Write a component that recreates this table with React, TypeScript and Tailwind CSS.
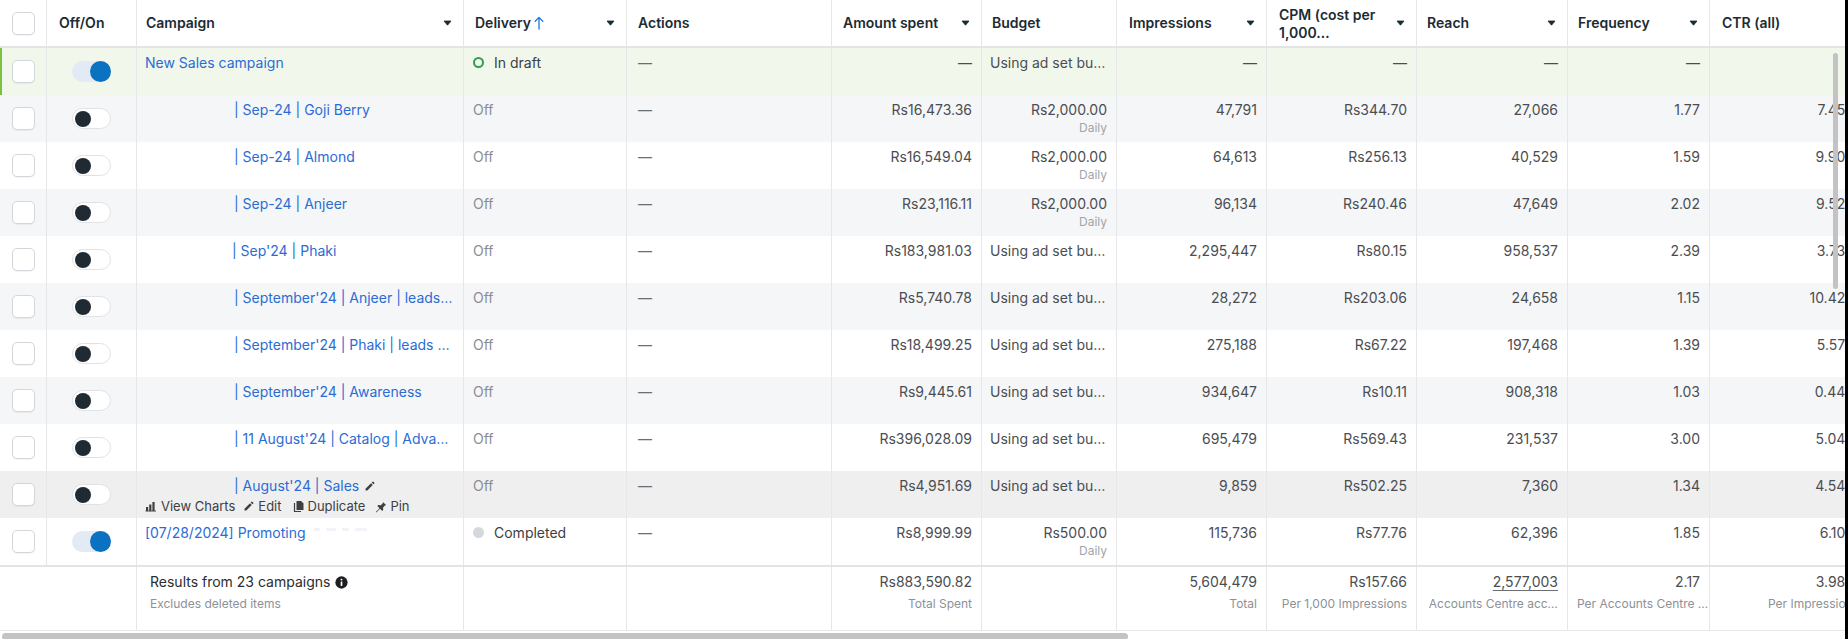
import React from "react";

const GRID =
  "grid grid-cols-[47px_90px_327px_163px_205px_150px_135px_150px_150px_151px_142px_159px]";

type Row = {
  name: string;
  indent: number;
  on?: boolean;
  delivery: "off" | "draft" | "completed";
  spent: string;
  budget: string;
  daily?: boolean;
  imp: string;
  cpm: string;
  reach: string;
  freq: string;
  ctr: string;
  bg: string;
  edit?: boolean;
  green?: boolean;
  faint?: boolean;
};

const USING = "Using ad set bu…";

const rows: Row[] = [
  { name: "New Sales campaign", indent: 0, on: true, delivery: "draft", spent: "—", budget: USING, imp: "—", cpm: "—", reach: "—", freq: "—", ctr: "—", bg: "bg-[#f1f8eb]", green: true },
  { name: "| Sep-24 | Goji Berry", indent: 89, delivery: "off", spent: "Rs16,473.36", budget: "Rs2,000.00", daily: true, imp: "47,791", cpm: "Rs344.70", reach: "27,066", freq: "1.77", ctr: "7.45%", bg: "bg-[#f5f6f7]" },
  { name: "| Sep-24 | Almond", indent: 89, delivery: "off", spent: "Rs16,549.04", budget: "Rs2,000.00", daily: true, imp: "64,613", cpm: "Rs256.13", reach: "40,529", freq: "1.59", ctr: "9.90%", bg: "bg-white" },
  { name: "| Sep-24 | Anjeer", indent: 89, delivery: "off", spent: "Rs23,116.11", budget: "Rs2,000.00", daily: true, imp: "96,134", cpm: "Rs240.46", reach: "47,649", freq: "2.02", ctr: "9.52%", bg: "bg-[#f5f6f7]" },
  { name: "| Sep'24 | Phaki", indent: 87, delivery: "off", spent: "Rs183,981.03", budget: USING, imp: "2,295,447", cpm: "Rs80.15", reach: "958,537", freq: "2.39", ctr: "3.73%", bg: "bg-white" },
  { name: "| September'24 | Anjeer | leads…", indent: 89, delivery: "off", spent: "Rs5,740.78", budget: USING, imp: "28,272", cpm: "Rs203.06", reach: "24,658", freq: "1.15", ctr: "10.42%", bg: "bg-[#f5f6f7]" },
  { name: "| September'24 | Phaki | leads …", indent: 89, delivery: "off", spent: "Rs18,499.25", budget: USING, imp: "275,188", cpm: "Rs67.22", reach: "197,468", freq: "1.39", ctr: "5.57%", bg: "bg-white" },
  { name: "| September'24 | Awareness", indent: 89, delivery: "off", spent: "Rs9,445.61", budget: USING, imp: "934,647", cpm: "Rs10.11", reach: "908,318", freq: "1.03", ctr: "0.44%", bg: "bg-[#f5f6f7]" },
  { name: "| 11 August'24 | Catalog | Adva…", indent: 89, delivery: "off", spent: "Rs396,028.09", budget: USING, imp: "695,479", cpm: "Rs569.43", reach: "231,537", freq: "3.00", ctr: "5.04%", bg: "bg-white" },
  { name: "| August'24 | Sales", indent: 89, delivery: "off", spent: "Rs4,951.69", budget: USING, imp: "9,859", cpm: "Rs502.25", reach: "7,360", freq: "1.34", ctr: "4.54%", bg: "bg-[#efefef]", edit: true },
  { name: "[07/28/2024] Promoting", indent: 0, on: true, delivery: "completed", spent: "Rs8,999.99", budget: "Rs500.00", daily: true, imp: "115,736", cpm: "Rs77.76", reach: "62,396", freq: "1.85", ctr: "6.10%", bg: "bg-white", faint: true },
];

const Caret = () => (
  <svg width="9" height="6" viewBox="0 0 9 6" className="shrink-0">
    <path d="M1 1h7L4.5 5.2z" fill="#1c2b33" stroke="#1c2b33" strokeWidth="0.8" strokeLinejoin="round" />
  </svg>
);

const UpArrow = () => (
  <svg width="10" height="14" viewBox="0 0 10 14" className="shrink-0">
    <path d="M5 13V1.5M1.2 5.2L5 1.4l3.8 3.8" fill="none" stroke="#1b74e4" strokeWidth="1.3" strokeLinecap="round" strokeLinejoin="round" />
  </svg>
);

const Checkbox = () => (
  <div className="w-[23px] h-[23px] rounded-[5px] border border-[#d3d6db] bg-white shadow-[0_1px_1px_rgba(0,0,0,0.05)]" />
);

const Toggle = ({ on }: { on?: boolean }) =>
  on ? (
    <div className="w-[39px] h-[21px] rounded-full bg-[#e2eaf5] flex items-center justify-end">
      <div className="w-[21px] h-[21px] rounded-full bg-[#0a72c0]" />
    </div>
  ) : (
    <div className="w-[39px] h-[21px] rounded-full bg-white border border-[#e0e2e6] flex items-center pl-[2px]">
      <div className="w-[16px] h-[16px] rounded-full bg-[#1f2a33]" />
    </div>
  );

const Pencil = ({ size = 12, color = "#3d4043" }: { size?: number; color?: string }) => (
  <svg width={size} height={size} viewBox="0 0 16 16" className="shrink-0">
    <path d="M2 11.6V14h2.4l7.3-7.3-2.4-2.4L2 11.6z" fill={color} />
    <path d="M13.8 4.6a.8.8 0 000-1.1l-1.3-1.3a.8.8 0 00-1.1 0L10.2 3.4l2.4 2.4 1.2-1.2z" fill={color} />
  </svg>
);

const Bars = () => (
  <svg width="12" height="12" viewBox="0 0 12 12" className="shrink-0">
    <rect x="1" y="7" width="2.2" height="4" fill="#3d4043" />
    <rect x="4.2" y="4.5" width="2.2" height="6.5" fill="#3d4043" />
    <rect x="7.4" y="2" width="2.2" height="9" fill="#3d4043" />
    <rect x="0.5" y="10.6" width="10.5" height="0.9" fill="#3d4043" />
  </svg>
);

const CopyIcon = () => (
  <svg width="12" height="13" viewBox="0 0 12 13" className="shrink-0">
    <path d="M1.5 3v8.5H8" fill="none" stroke="#3d4043" strokeWidth="1.2" />
    <path d="M3.5 1h4.6L10.5 3.4V10H3.5z" fill="#3d4043" />
  </svg>
);

const PinIcon = () => (
  <svg width="13" height="13" viewBox="0 0 16 16" className="shrink-0">
    <path d="M9.8 1.2l5 5-1.3.5-2.4 2.4.3 3-1.3 1.3-2.7-2.7-4.6 4.6-.6-.6 4.6-4.6-2.7-2.7 1.3-1.3 3 .3 2.4-2.4.5-1.3z" fill="#3d4043" />
  </svg>
);

const InfoIcon = () => (
  <svg width="13" height="13" viewBox="0 0 14 14" className="shrink-0">
    <circle cx="7" cy="7" r="6.6" fill="#1c1e21" />
    <rect x="6.1" y="5.8" width="1.8" height="5" rx="0.5" fill="#fff" />
    <circle cx="7" cy="3.9" r="1.05" fill="#fff" />
  </svg>
);

const B = "border-r border-[#e6e7e9]";

const HeadCell = ({
  label,
  caret,
  children,
  pl = "pl-[11px]",
}: {
  label?: React.ReactNode;
  caret?: boolean;
  children?: React.ReactNode;
  pl?: string;
}) => (
  <div className={`${B} ${pl} pr-[11px] flex items-center justify-between text-[14px] font-semibold text-[#1c2b33] leading-[18px]`}>
    <div className="flex items-center gap-[3px]">
      {label}
      {children}
    </div>
    {caret && <Caret />}
  </div>
);

const Num = ({ v, sub }: { v: string; sub?: string }) => (
  <div className={`${B} px-[9px] pt-[6px] text-right`}>
    <div className="leading-[17px]">{v}</div>
    {sub && <div className="text-[12px] leading-[15px] text-[#a2a5aa] mt-[2px]">{sub}</div>}
  </div>
);

const FootNum = ({ v, sub, underline }: { v: string; sub: string; underline?: boolean }) => (
  <div className={`${B} px-[9px] pt-[6px] text-right whitespace-nowrap`}>
    <div className={`leading-[18px] text-[14px] text-[#4a4d52] ${underline ? "underline decoration-[#6b6e73] underline-offset-[3px]" : ""}`}>{v}</div>
    <div className="text-[12px] leading-[15px] text-[#8d9197] mt-[5px]">{sub}</div>
  </div>
);

export default function App() {
  return (
    <div className="relative w-[1848px] h-[639px] overflow-hidden bg-black [font-family:Inter,'Liberation_Sans',sans-serif]">
      <div className="w-[1845px] h-[639px] overflow-hidden bg-white">
        <div className="w-[1869px]">
          {/* header */}
          <div className={`${GRID} h-[48px] border-b-2 border-[#e3e4e6] bg-white`}>
            <div className={`${B} flex items-center pl-[12px]`}>
              <Checkbox />
            </div>
            <HeadCell label="Off/On" pl="pl-[12px]" />
            <HeadCell label="Campaign" caret pl="pl-[9px]" />
            <HeadCell label="Delivery" caret>
              <UpArrow />
            </HeadCell>
            <HeadCell label="Actions" />
            <HeadCell label="Amount spent" caret />
            <HeadCell label="Budget" pl="pl-[10px]" />
            <HeadCell label="Impressions" caret pl="pl-[12px]" />
            <HeadCell
              caret
              pl="pl-[12px]"
              label={
                <div className="flex flex-col leading-[18px] pt-[1px]">
                  <span>CPM (cost per</span>
                  <span>1,000…</span>
                </div>
              }
            />
            <HeadCell label="Reach" caret pl="pl-[10px]" />
            <HeadCell label="Frequency" caret pl="pl-[10px]" />
            <HeadCell label="CTR (all)" pl="pl-[12px]" />
          </div>

          {/* rows */}
          {rows.map((r, i) => (
            <div key={i} className={`${GRID} h-[47px] text-[14px] text-[#4a4d52] ${r.bg}`}>
              <div className={`${B} flex items-center pl-[12px] ${r.green ? "shadow-[inset_2px_0_0_#7cc242]" : ""}`}>
                <Checkbox />
              </div>
              <div className={`${B} flex items-center justify-center`}>
                <Toggle on={r.on} />
              </div>
              <div className={`${B} pl-[8px] pr-[13px] pt-[6px] min-w-0`}>
                <div className="flex items-center leading-[17px] whitespace-nowrap">
                  <div className="shrink-0" style={{ width: r.indent }} />
                  <span className="text-[#2b6cd4]">{r.name}</span>
                  {r.edit && (
                    <span className="ml-[5px]">
                      <Pencil size={12} color="#3d4043" />
                    </span>
                  )}
                  {r.faint && (
                    <span className="ml-[8px] flex items-center gap-[6px] -mt-[6px]">
                      <span className="w-[6px] h-[3px] rounded-full bg-[#eef2f9]" />
                      <span className="w-[10px] h-[3px] rounded-full bg-[#f0f3f9]" />
                      <span className="w-[7px] h-[3px] rounded-full bg-[#eef2f9]" />
                      <span className="w-[12px] h-[3px] rounded-full bg-[#f1f4f9]" />
                    </span>
                  )}
                </div>
                {r.edit && (
                  <div className="flex items-center gap-[8px] text-[13px] leading-[16px] text-[#3d4043] mt-[4px]">
                    <span className="flex items-center gap-[4px]">
                      <Bars />
                      View Charts
                    </span>
                    <span className="flex items-center gap-[3px]">
                      <Pencil size={12} />
                      Edit
                    </span>
                    <span className="flex items-center gap-[3px] ml-[3px]">
                      <CopyIcon />
                      Duplicate
                    </span>
                    <span className="flex items-center gap-[3px] ml-[1px]">
                      <PinIcon />
                      Pin
                    </span>
                  </div>
                )}
              </div>
              <div className={`${B} pl-[9px] pt-[6px]`}>
                {r.delivery === "off" && <div className="leading-[17px] text-[#8a8d91]">Off</div>}
                {r.delivery === "draft" && (
                  <div className="flex items-center gap-[10px] leading-[17px] text-[#3d4043]">
                    <span className="w-[11px] h-[11px] rounded-full border-2 border-[#2e9e4f]" />
                    In draft
                  </div>
                )}
                {r.delivery === "completed" && (
                  <div className="flex items-center gap-[10px] leading-[17px] text-[#3d4043]">
                    <span className="w-[11px] h-[11px] rounded-full bg-[#d5d8dc]" />
                    Completed
                  </div>
                )}
              </div>
              <div className={`${B} pl-[11px] pt-[6px] leading-[17px] text-[#6b6e73]`}>—</div>
              <Num v={r.spent} />
              {r.budget === USING ? (
                <div className={`${B} pl-[8px] pt-[6px] leading-[17px] whitespace-nowrap`}>{r.budget}</div>
              ) : (
                <Num v={r.budget} sub={r.daily ? "Daily" : undefined} />
              )}
              <Num v={r.imp} />
              <Num v={r.cpm} />
              <Num v={r.reach} />
              <Num v={r.freq} />
              <Num v={r.ctr} />
            </div>
          ))}

          {/* footer */}
          <div className={`${GRID} h-[66px] border-t-2 border-[#e3e4e6] border-b border-b-[#e6e7e9] bg-white`}>
            <div className={`${B} col-span-2`} />
            <div className={`${B} pl-[13px] pt-[6px]`}>
              <div className="flex items-center gap-[5px] text-[14px] leading-[18px] text-[#2a2d31]">
                Results from 23 campaigns
                <InfoIcon />
              </div>
              <div className="text-[12px] leading-[15px] text-[#8d9197] mt-[5px]">Excludes deleted items</div>
            </div>
            <div className={B} />
            <div className={B} />
            <FootNum v="Rs883,590.82" sub="Total Spent" />
            <div className={B} />
            <FootNum v="5,604,479" sub="Total" />
            <FootNum v="Rs157.66" sub="Per 1,000 Impressions" />
            <FootNum v="2,577,003" sub="Accounts Centre acc…" underline />
            <FootNum v="2.17" sub="Per Accounts Centre …" />
            <FootNum v="3.98%" sub="Per Impressions" />
          </div>

          {/* horizontal scrollbar */}
          <div className="h-[8px] pt-[2px] pl-[2px] bg-white">
            <div className="w-[1126px] h-[7px] rounded-full bg-[#c3c3c3]" />
          </div>
        </div>
      </div>

      {/* vertical scrollbar overlay */}
      <div className="absolute left-[1833px] top-[53px] w-[5px] h-[236px] rounded-full bg-[#c3c3c3]" />
    </div>
  );
}
